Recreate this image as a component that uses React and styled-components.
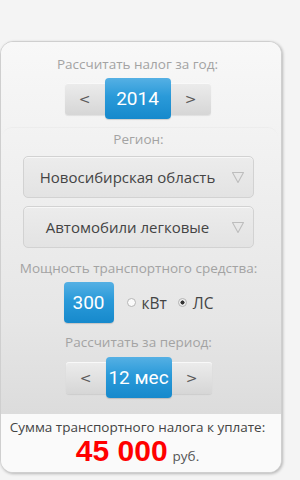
import React from 'react';
import styled, { createGlobalStyle } from 'styled-components';

const GlobalStyle = createGlobalStyle`
  body {
    margin: 0;
    background: #f4f4f4;
    font-family: "Open Sans", "Liberation Sans", sans-serif;
  }
`

const Page = styled.div`
  padding-top: 41px;
  height: 480px;
  box-sizing: border-box;
`

const Card = styled.div`
  width: 282px;
  height: 432px;
  box-sizing: border-box;
  border: 1px solid #cfcfcf;
  border-radius: 13px;
  box-shadow: 1px 1px 3px rgba(0, 0, 0, 0.25);
  overflow: hidden;
  display: flex;
  flex-direction: column;
  background: #fafafa;
`

const Calc = styled.div`
  height: 372px;
  background: linear-gradient(#f8f8f8 0%, #f1f1f1 30%, #e6e6e6 75%, #dcdcdc 100%);
  display: flex;
  flex-direction: column;
  align-items: center;
  padding-right: 7px;
`

const Inner = styled.div`
  align-self: stretch;
  margin: 8px -4px 0 1px;
  border-top: 1px solid rgba(0, 0, 0, 0.025);
  border-radius: 10px 10px 0 0;
  display: flex;
  flex-direction: column;
  align-items: center;
  padding-right: 3px;
`

const Label = styled.div`
  font-size: 13.5px;
  color: #a3a3a3;
  line-height: 16px;
  margin-top: ${p => p.top}px;
  white-space: nowrap;
`

const Stepper = styled.div`
  display: flex;
  align-items: center;
  margin-top: ${p => p.top}px;
`

const Arrow = styled.button`
  width: 40px;
  height: 32px;
  border: none;
  padding: 0;
  background: linear-gradient(#ececec, #d6d6d6);
  border-radius: ${p => (p.left ? '3px 0 0 3px' : '0 3px 3px 0')};
  box-shadow: inset 0 1px 0 rgba(255, 255, 255, 0.7), 0 1px 1px rgba(0, 0, 0, 0.08);
  color: #5a5a5a;
  font-family: "DejaVu Sans", sans-serif;
  font-size: 14px;
`

const BlueBox = styled.div`
  width: ${p => p.w}px;
  height: 41px;
  border-radius: 4px;
  background: linear-gradient(#55b0e4 0%, #2a9ad9 45%, #1689cc 100%);
  box-shadow: 0 1px 1px rgba(0, 0, 0, 0.15);
  color: #fff;
  font-family: Roboto, "Liberation Sans", sans-serif;
  font-size: 19px;
  display: flex;
  align-items: center;
  justify-content: center;
`

const Select = styled.div`
  width: 231px;
  height: 42px;
  box-sizing: border-box;
  margin-top: ${p => p.top}px;
  border: 1px solid #d2d2d2;
  border-radius: 5px;
  background: linear-gradient(#ececec, #e3e3e3);
  box-shadow: inset 0 1px 0 rgba(255, 255, 255, 0.6);
  display: flex;
  align-items: center;
  padding: 0 8px 0 0;
  color: #444;
  font-size: 15px;
`

const SelectText = styled.span`
  flex: 1;
  text-align: center;
  white-space: nowrap;
`

const PowerRow = styled.div`
  display: flex;
  align-items: center;
  margin-top: 6px;
`

const Radio = styled.label`
  display: flex;
  align-items: center;
  font-size: 15.5px;
  color: #444;
  margin-left: ${p => p.ml}px;
  gap: 6px;
`

const Dot = styled.span`
  width: 9px;
  height: 9px;
  box-sizing: border-box;
  border-radius: 50%;
  border: 1px solid #b5b5b5;
  background: ${p => (p.on ? 'radial-gradient(circle, #333 0 1.8px, #eee 2.3px)' : '#fafafa')};
`

const Footer = styled.div`
  flex: 1;
  background: #fafafa;
  display: flex;
  flex-direction: column;
  align-items: center;
  padding-right: 7px;
`

const SumLabel = styled.div`
  font-size: 13.5px;
  color: #444;
  margin-top: 5px;
  line-height: 16px;
  white-space: nowrap;
`

const Amount = styled.div`
  display: flex;
  align-items: baseline;
  gap: 5px;
`

const Big = styled.span`
  font-family: "Liberation Sans", Arial, sans-serif;
  font-weight: bold;
  font-size: 30px;
  color: #f00;
  line-height: 31px;
`

const Rub = styled.span`
  font-size: 13.5px;
  color: #555;
`

const Chevron = () => (
  <svg width="14" height="13" viewBox="0 0 14 13">
    <path d="M1.5 1.5 H12.5 L7 11.5 Z" fill="none" stroke="#bdbdbd" strokeWidth="1.1" strokeLinejoin="round" />
  </svg>
)

export default function App() {
  return (
    <Page>
      <GlobalStyle />
      <Card>
        <Calc>
          <Label top={14}>Рассчитать налог за год:</Label>
          <Stepper top={6}>
            <Arrow left>&lt;</Arrow>
            <BlueBox w={66}>2014</BlueBox>
            <Arrow>&gt;</Arrow>
          </Stepper>
          <Inner>
            <Label top={3}>Регион:</Label>
            <Select top={9}>
              <SelectText>Новосибирская область</SelectText>
              <Chevron />
            </Select>
            <Select top={8}>
              <SelectText>Автомобили легковые</SelectText>
              <Chevron />
            </Select>
            <Label top={12}>Мощность транспортного средства:</Label>
            <PowerRow>
              <BlueBox w={50}>300</BlueBox>
              <Radio ml={13}><Dot />кВт</Radio>
              <Radio ml={11}><Dot on />ЛС</Radio>
            </PowerRow>
            <Label top={11}>Рассчитать за период:</Label>
            <Stepper top={7}>
              <Arrow left>&lt;</Arrow>
              <BlueBox w={66}>12 мес</BlueBox>
              <Arrow>&gt;</Arrow>
            </Stepper>
          </Inner>
        </Calc>
        <Footer>
          <SumLabel>Сумма транспортного налога к уплате:</SumLabel>
          <Amount>
            <Big>45 000</Big>
            <Rub>руб.</Rub>
          </Amount>
        </Footer>
      </Card>
    </Page>
  );
}
